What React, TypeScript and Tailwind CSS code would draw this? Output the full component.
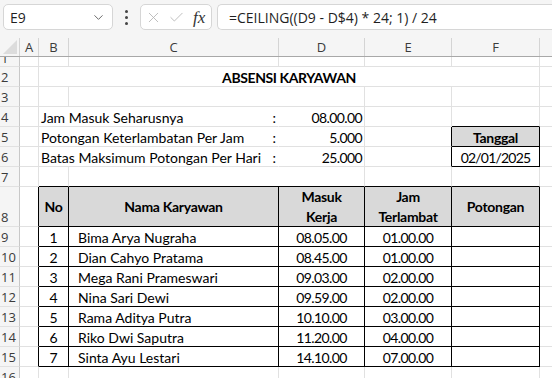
import { ChevronDown, X, Check } from 'lucide-react';
import type { ReactNode } from 'react';

const GRID_R = 'border-r-[#e1e1e1]';
const GRID_B = 'border-b-[#e1e1e1]';
const BLACK_R = 'border-r-black';
const BLACK_B = 'border-b-black';
const NONE_R = 'border-r-transparent';

const A = 'w-[19px]';
const B = 'w-[30px]';
const C = 'w-[210px]';
const D = 'w-[86px]';
const E = 'w-[87px]';
const F = 'w-[88px]';
const G = 'w-[64px]';
const BC = 'w-[240px]';
const CD = 'w-[296px]';
const BF = 'w-[501px]';

const NUM = 'tracking-[-0.6px]';
const HEAD = 'items-center justify-center bg-[#d9d9d9] font-bold tracking-[-0.3px]';

const karyawan = [
  { no: 1, nama: 'Bima Arya Nugraha', masuk: '08.05.00', telat: '01.00.00' },
  { no: 2, nama: 'Dian Cahyo Pratama', masuk: '08.45.00', telat: '01.00.00' },
  { no: 3, nama: 'Mega Rani Prameswari', masuk: '09.03.00', telat: '02.00.00' },
  { no: 4, nama: 'Nina Sari Dewi', masuk: '09.59.00', telat: '02.00.00' },
  { no: 5, nama: 'Rama Aditya Putra', masuk: '10.10.00', telat: '03.00.00' },
  { no: 6, nama: 'Riko Dwi Saputra', masuk: '11.20.00', telat: '04.00.00' },
  { no: 7, nama: 'Sinta Ayu Lestari', masuk: '14.10.00', telat: '07.00.00' },
];

function Cell({
  w,
  r = GRID_R,
  b = GRID_B,
  className = 'items-end',
  children,
}: {
  w: string;
  r?: string;
  b?: string;
  className?: string;
  children?: ReactNode;
}) {
  return (
    <div className={`${w} shrink-0 border-r border-b ${r} ${b} flex whitespace-nowrap ${className}`}>
      {children}
    </div>
  );
}

function Row({ n, h = 'h-[20px]', children }: { n: number; h?: string; children: ReactNode }) {
  return (
    <div className={`flex ${h} overflow-hidden`}>
      <div className="w-[20px] shrink-0 bg-[#f5f5f5] border-r border-b border-r-[#c8c8c8] border-b-[#e1e1e1] flex items-end pl-[1px] font-['Open_Sans',sans-serif] text-[13px] leading-[17px] text-[#3b3b3b]">
        {n}
      </div>
      {children}
    </div>
  );
}

export default function App() {
  return (
    <div className="w-[552px] h-[378px] overflow-hidden bg-white font-['Lato',sans-serif] text-[14px] leading-[17px] text-black">
      {/* Formula bar */}
      <div className="h-[38px] bg-[#f5f5f5] flex items-start pt-[4px] pl-[3px] gap-[5px] font-['Open_Sans',sans-serif]">
        <div className="w-[110px] h-[26px] bg-white border border-[#d6d6d6] rounded-[5px] flex items-center justify-between pl-[6px] pr-[6px] text-[14px] text-[#1f1f1f]">
          <span>E9</span>
          <ChevronDown className="w-[15px] h-[15px] text-[#616161]" strokeWidth={1.5} />
        </div>
        <div className="w-[17px] h-[26px] flex flex-col items-center justify-center gap-[3px]">
          <div className="w-[3px] h-[3px] rounded-full bg-[#444]" />
          <div className="w-[3px] h-[3px] rounded-full bg-[#444]" />
          <div className="w-[3px] h-[3px] rounded-full bg-[#444]" />
        </div>
        <div className="w-[72px] h-[26px] bg-white border border-[#d6d6d6] rounded-[5px] flex items-center pl-[4px] gap-[6px]">
          <X className="w-[17px] h-[17px] text-[#b4b4b4]" strokeWidth={1.2} />
          <Check className="w-[17px] h-[17px] text-[#b4b4b4]" strokeWidth={1.2} />
          <span className="font-['Liberation_Serif',serif] italic text-[17px] text-[#333] ml-[2px]">fx</span>
        </div>
        <div className="flex-1 h-[26px] bg-white border border-[#d6d6d6] border-r-0 rounded-l-[5px] flex items-center pl-[11px] text-[14px] text-[#1f1f1f]">
          =CEILING((D9 - D$4) * 24; 1) / 24
        </div>
      </div>

      {/* Column headers */}
      <div className="flex h-[19px] bg-[#f5f5f5] border-b border-[#a8a8a8] font-['Open_Sans',sans-serif] text-[13px] text-[#3b3b3b]">
        <div className="w-[20px] shrink-0 border-r border-[#d4d4d4] relative">
          <div className="absolute right-[2px] bottom-[2px] w-0 h-0 border-l-[14px] border-l-transparent border-b-[14px] border-b-[#dcdcdc]" />
        </div>
        {[
          [A, 'A'],
          [B, 'B'],
          [C, 'C'],
          [D, 'D'],
          [E, 'E'],
          [F, 'F'],
          [G, ''],
        ].map(([w, l]) => (
          <div key={l + w} className={`${w} shrink-0 border-r border-[#d4d4d4] flex items-center justify-center`}>
            {l}
          </div>
        ))}
      </div>

      {/* Row 1 (partly scrolled) */}
      <div className="flex h-[10px] overflow-hidden">
        <div className="w-[20px] shrink-0 bg-[#f5f5f5] border-r border-b border-r-[#c8c8c8] border-b-[#e1e1e1] relative overflow-hidden font-['Open_Sans',sans-serif] text-[13px] leading-[17px] text-[#3b3b3b]">
          <span className="absolute left-[1px] bottom-[-1px]">1</span>
        </div>
        <Cell w={A} />
        <Cell w={B} />
        <Cell w={C} />
        <Cell w={D} />
        <Cell w={E} />
        <Cell w={F} />
        <Cell w={G} />
      </div>

      <Row n={2}>
        <Cell w={A} />
        <Cell w={BF} r={GRID_R} className="items-end justify-center font-bold tracking-[-0.4px]">
          ABSENSI KARYAWAN
        </Cell>
        <Cell w={G} />
      </Row>

      <Row n={3}>
        <Cell w={A} />
        <Cell w={B} />
        <Cell w={CD} />
        <Cell w={E} />
        <Cell w={F} />
        <Cell w={G} />
      </Row>

      <Row n={4}>
        <Cell w={A} />
        <Cell w={BC} r={NONE_R} className="items-end justify-between pl-[2px] pr-[2px]">
          <span>Jam Masuk Seharusnya</span>
          <span>:</span>
        </Cell>
        <Cell w={D} className={`items-end justify-end pr-[2px] ${NUM}`}>08.00.00</Cell>
        <Cell w={E} />
        <Cell w={F} b={BLACK_B} />
        <Cell w={G} />
      </Row>

      <Row n={5}>
        <Cell w={A} />
        <Cell w={BC} r={NONE_R} className="items-end justify-between pl-[2px] pr-[2px]">
          <span>Potongan Keterlambatan Per Jam</span>
          <span>:</span>
        </Cell>
        <Cell w={D} className={`items-end justify-end pr-[2px] ${NUM}`}>5.000</Cell>
        <Cell w={E} r={BLACK_R} />
        <Cell w={F} r={BLACK_R} b={BLACK_B} className="items-end justify-center bg-[#d9d9d9] font-bold tracking-[-0.3px]">
          Tanggal
        </Cell>
        <Cell w={G} />
      </Row>

      <Row n={6}>
        <Cell w={A} />
        <Cell w={BC} r={NONE_R} className="items-end justify-between pl-[2px] pr-[2px]">
          <span>Batas Maksimum Potongan Per Hari</span>
          <span>:</span>
        </Cell>
        <Cell w={D} className={`items-end justify-end pr-[2px] ${NUM}`}>25.000</Cell>
        <Cell w={E} r={BLACK_R} />
        <Cell w={F} r={BLACK_R} b={BLACK_B} className="items-end justify-center tracking-[-0.8px]">
          02/01/2025
        </Cell>
        <Cell w={G} />
      </Row>

      <Row n={7}>
        <Cell w={A} />
        <Cell w={B} b={BLACK_B} />
        <Cell w={CD} b={BLACK_B} />
        <Cell w={E} b={BLACK_B} />
        <Cell w={F} b={BLACK_B} />
        <Cell w={G} />
      </Row>

      {/* Table header */}
      <Row n={8} h="h-[40px]">
        <Cell w={A} r={BLACK_R} />
        <Cell w={B} r={BLACK_R} b={BLACK_B} className={HEAD}>
          No
        </Cell>
        <Cell w={C} r={BLACK_R} b={BLACK_B} className={HEAD}>
          Nama Karyawan
        </Cell>
        <Cell w={D} r={BLACK_R} b={BLACK_B} className={HEAD}>
          <div className="text-center leading-[20px]">
            Masuk
            <br />
            Kerja
          </div>
        </Cell>
        <Cell w={E} r={BLACK_R} b={BLACK_B} className={HEAD}>
          <div className="text-center leading-[20px]">
            Jam
            <br />
            Terlambat
          </div>
        </Cell>
        <Cell w={F} r={BLACK_R} b={BLACK_B} className={HEAD}>
          Potongan
        </Cell>
        <Cell w={G} />
      </Row>

      {karyawan.map((k, i) => (
        <Row key={k.no} n={9 + i}>
          <Cell w={A} r={BLACK_R} />
          <Cell w={B} r={BLACK_R} b={BLACK_B} className="items-end justify-center">
            {k.no}
          </Cell>
          <Cell w={C} r={BLACK_R} b={BLACK_B} className="items-end pl-[9px]">
            {k.nama}
          </Cell>
          <Cell w={D} r={BLACK_R} b={BLACK_B} className={`items-end justify-center ${NUM}`}>
            {k.masuk}
          </Cell>
          <Cell w={E} r={BLACK_R} b={BLACK_B} className={`items-end justify-center ${NUM}`}>
            {k.telat}
          </Cell>
          <Cell w={F} r={BLACK_R} b={BLACK_B} />
          <Cell w={G} />
        </Row>
      ))}

      <Row n={16}>
        <Cell w={A} />
        <Cell w={B} />
        <Cell w={C} />
        <Cell w={D} />
        <Cell w={E} />
        <Cell w={F} />
        <Cell w={G} />
      </Row>
    </div>
  );
}
